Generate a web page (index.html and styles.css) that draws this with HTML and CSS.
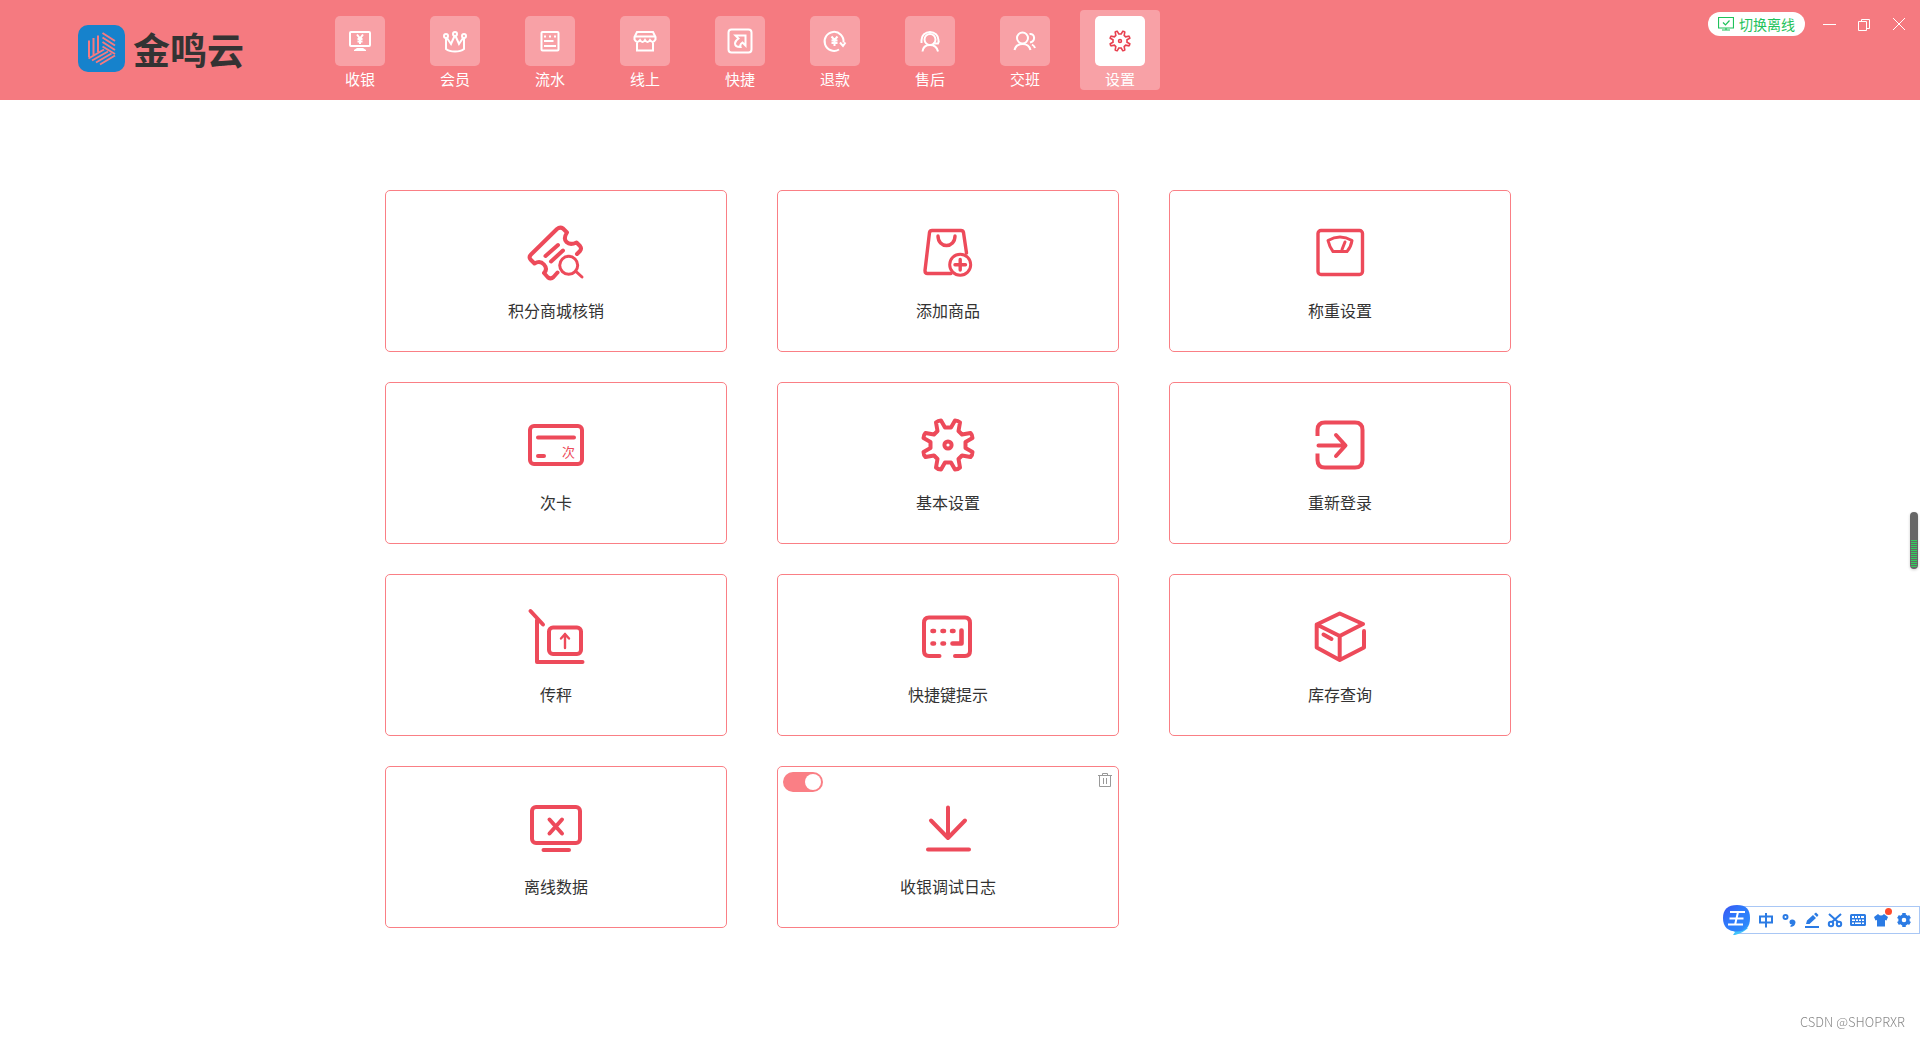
FILE: index.html
```html
<!DOCTYPE html>
<html lang="zh-CN">
<head>
<meta charset="utf-8">
<meta name="viewport" content="width=device-width, initial-scale=1">
<title>金鸣云</title>
<link rel="stylesheet" href="styles.css">
</head>
<body>
<svg class="defs" aria-hidden="true">
  <symbol id="gear" viewBox="-30 -30 60 60">
    <path d="M-3-17.500H3L7-24.500Q10-24.500 12-22.500L10.500-14L14-10.500L22.500-12Q24.500-10 24.500-7L17.500-3V3L24.500 7Q24.500 10 22.500 12L14 10.500L10.500 14L12 22.500Q10 24.500 7 24.500L3 17.500H-3L-7 24.500Q-10 24.500-12 22.500L-10.500 14L-14 10.500L-22.500 12Q-24.500 10-24.500 7L-17.500 3V-3L-24.500-7Q-24.500-10-22.500-12L-14-10.500L-10.500-14L-12-22.500Q-10-24.500-7-24.500Z"/>
    <circle r="3.600"/>
  </symbol>
</svg>

<header class="topbar">
  <a class="brand" href="#">
    <svg class="brand-mark" viewBox="0 0 47 47" aria-hidden="true">
      <rect width="47" height="47" rx="10" fill="#1682cc"/>
      <g stroke="#f57a80" stroke-width="2" fill="none">
        <path d="M11 15.500V32M15.500 13V30M20 10.500V27M24.500 8L37 16M24.500 12.500L37 20.500M24.500 17L37 25M24.500 21.500L37 29M10.500 33.500L26 24.500M14 35.500L30 26.500M18 37.500L33.500 28.500M22 39.500L37 30.500"/>
      </g>
    </svg>
    <span>金鸣云</span>
  </a>

  <nav class="menu" aria-label="主导航">
    <a class="menu-item" href="#"><span class="tile"><svg viewBox="0 0 50 50"><rect x="15" y="16" width="20" height="14" rx="1"/><path d="M22 18.500L25 22.500L28 18.500M25 22.500V28M22.500 23H27.500M22.500 25.500H27.500"/><path class="solid" d="M22 32H28L31 34V35H19V34Z"/></svg></span>收银</a>
    <a class="menu-item" href="#"><span class="tile"><svg viewBox="0 0 50 50"><circle cx="16" cy="20" r="2"/><circle cx="25" cy="18" r="2"/><circle cx="34" cy="20" r="2"/><path d="M16 22V33Q19 35.500 25 35.500T34 33V22M17 22L21 28L24.500 20M33 22L29 28L25.500 20"/></svg></span>会员</a>
    <a class="menu-item" href="#"><span class="tile"><svg viewBox="0 0 50 50"><rect x="16.500" y="16" width="17" height="18.500" rx="1"/><path d="M19 20.500H21M24 20.500H26M29 20.500H31M19 25H28.500M19 30H31"/></svg></span>流水</a>
    <a class="menu-item" href="#"><span class="tile"><svg viewBox="0 0 50 50"><path d="M17 16H33L35.500 21V23.500Q33 28 30 24Q27.500 28 25 24Q22.500 28 20 24Q17 28 14.500 23.500V21ZM14.500 20.500H35.500M17 26V34.500H33V26"/></svg></span>线上</a>
    <a class="menu-item" href="#"><span class="tile"><svg viewBox="0 0 50 50"><rect x="13.500" y="13.500" width="23" height="23" rx="3"/><path d="M20.500 19.500H30.500V29.500L27.500 26.500Q24.500 28.500 25.500 31Q20 31 20 27.500Q20 25 23.500 22.500Z"/></svg></span>快捷</a>
    <a class="menu-item" href="#"><span class="tile"><svg viewBox="0 0 50 50"><path d="M29 33.500A9.500 9.500 0 1 1 33.500 26.500M30 26.500L33 30L35.500 26.500M21.500 20.500L24.500 24L27.500 20.500M24.500 24V30M21.500 24.500H27.500M21.500 27H27.500"/></svg></span>退款</a>
    <a class="menu-item" href="#"><span class="tile"><svg viewBox="0 0 50 50"><circle cx="25" cy="23.500" r="5.500"/><path d="M16.500 27V24A8.500 8 0 0 1 33.500 24V26.500M17.500 35.500C18 31 21 29 25 29S32 31 33 35.500M28 27.500H33L34 25"/></svg></span>售后</a>
    <a class="menu-item" href="#"><span class="tile"><svg viewBox="0 0 50 50"><circle cx="22.500" cy="22" r="5.500"/><path d="M14.500 34Q16 28 22.500 28T30.500 34M29.500 18C35 17 36 25 30 26.500M32 28.500Q34.500 30 35 32"/></svg></span>交班</a>
    <a class="menu-item active" href="#" aria-current="page"><span class="tile"><svg class="nav-gear" viewBox="0 0 60 60"><use href="#gear"/></svg></span>设置</a>
  </nav>

  <div class="window-tools">
    <button class="offline" type="button"><svg viewBox="0 0 16 16" aria-hidden="true"><path d="M.5 1.500H15.500V12H.5ZM4 14H12M8 12V14M5 6.500L7.500 9L11.500 4.500"/></svg>切换离线</button>
    <button class="win" type="button" aria-label="最小化"><svg viewBox="0 0 14 14"><path d="M1 7.500H14"/></svg></button>
    <button class="win" type="button" aria-label="还原"><svg viewBox="0 0 14 14"><path d="M1.500 4.500H9.500V13.500H1.500ZM4.500 4V2.500H12.500V11.500H10"/></svg></button>
    <button class="win" type="button" aria-label="关闭"><svg viewBox="0 0 14 14"><path d="M1 1L13 13M13 1L1 13"/></svg></button>
  </div>
</header>

<main class="content">
  <div class="cards">
    <div class="card"><button type="button"><svg viewBox="0 0 60 60" stroke-width="4"><path d="M51 32L54 29Q56 26.500 54 24L50.500 20.500Q44 23.500 40.500 20T41 10.500L37 6.500Q34 4.500 31 7L5 32.500Q2.500 35 4.500 37.500L8.500 41.500Q14 38 18 42.500T18 51L22 55.500Q25 57.500 27.500 55L31.500 50.500M32 23L19.500 34M37 28.500L25 39.500"/><circle cx="42.700" cy="43.300" r="9" stroke-width="3"/><path stroke-width="3" d="M50 49.500L56 55"/></svg>积分商城核销</button></div>
    <div class="card"><button type="button"><svg viewBox="0 0 60 60" stroke-width="3.400"><path d="M48.500 31L45.500 10.500Q45 8.500 43 8.500H14Q12 8.500 11.500 10.500L7 48.500Q7 51.500 9.500 51.500H33M20 14C20 20 24 23.500 28.500 23.500S37 20 37 14"/><circle cx="42.200" cy="42.700" r="10.500" stroke-width="3"/><path d="M37 42.700H47.500M42.200 37.500V48"/></svg>添加商品</button></div>
    <div class="card"><button type="button"><svg viewBox="0 0 60 60" stroke-width="3.400"><rect x="8" y="8.500" width="44.500" height="44" rx="3"/><path stroke-width="3" d="M18 18.500Q30 11.500 42 18.500Q41 25 37 29.500H23Q19.500 25 18 18.500ZM35 20L32 27.500"/></svg>称重设置</button></div>
    <div class="card"><button type="button"><svg viewBox="0 0 60 60" stroke-width="4"><rect x="4" y="12" width="52" height="38" rx="4"/><path d="M12 23.500H48M12 42H18"/><text x="36" y="43">次</text></svg>次卡</button></div>
    <div class="card"><button type="button"><svg viewBox="0 0 60 60" stroke-width="4"><use href="#gear" y="1" width="60" height="60"/></svg>基本设置</button></div>
    <div class="card"><button type="button"><svg viewBox="0 0 60 60" stroke-width="4"><path stroke-linecap="butt" d="M7.500 22V16Q7.500 8.500 15 8.500H45Q52.500 8.500 52.500 16V46Q52.500 53.500 45 53.500H15Q7.500 53.500 7.500 46V39.500"/><path d="M8.500 31.500H35M26 21L35.500 31.500L26 42"/></svg>重新登录</button></div>
    <div class="card"><button type="button"><svg viewBox="0 0 60 60" stroke-width="4"><path d="M4.500 5L17 18.500M11 14V56H56.500"/><rect x="23" y="21.500" width="32" height="26.500" rx="4"/><path stroke-width="2.400" d="M39 28V42M35 32.500L39 28L43 32.500"/></svg>传秤</button></div>
    <div class="card"><button type="button"><svg viewBox="0 0 60 60" stroke-width="4"><path d="M21.500 50H11Q6 50 6 45V17Q6 11.500 11 11.500H47Q52 11.500 52 17V45Q52 50 47 50H37"/><path stroke-width="4.600" d="M14.500 25H16M24.500 25H26M34 25H35.500M14.500 37.500H16M24.500 37.500H26M34.500 37.500H43.500V24.500"/></svg>快捷键提示</button></div>
    <div class="card"><button type="button"><svg viewBox="0 0 60 60" stroke-width="4"><path d="M53 18L29.700 7.500L6.700 18.500V41.500L29.700 54L54 41.500V25M53 18L29.700 30V54M6.700 18.500L29.700 30M13.500 28.500L21.500 33"/></svg>库存查询</button></div>
    <div class="card"><button type="button"><svg viewBox="0 0 60 60" stroke-width="4"><rect x="6" y="9" width="48" height="36" rx="4"/><path d="M23.500 21.500L36 35.500M36 21.500L23.500 35.500M17.500 52H43"/></svg>离线数据</button></div>
    <div class="card">
      <button type="button"><svg viewBox="0 0 60 60" stroke-width="4"><path d="M30 9.500V40M13 22.500L30 40L47 22.500M10 51.500H51"/></svg>收银调试日志</button>
      <input class="switch" type="checkbox" role="switch" aria-label="收银调试日志" checked>
      <button class="trash" type="button" aria-label="删除"><svg viewBox="0 0 14 14"><path d="M0 2.500H14M4.500 2.500V.5H9.500V2.500M1.500 2.500V13.500H12.500V2.500M5.500 5V11M8.500 5V11"/></svg></button>
    </div>
  </div>
</main>

<div class="meter" aria-hidden="true"><span></span></div>

<div class="ime" role="toolbar" aria-label="输入法">
  <svg class="ime-logo" viewBox="0 0 28 30" aria-hidden="true">
    <defs><linearGradient id="ime-blue" x1="0" y1="0" x2="1" y2="1"><stop offset="0" stop-color="#3b52f2"/><stop offset=".4" stop-color="#2e78fb"/><stop offset=".8" stop-color="#2e86fb"/><stop offset="1" stop-color="#34c8ff"/></linearGradient></defs>
    <path fill="#42c3fa" d="M6 23H25Q20 28 12 30H10L12 27Z"/>
    <path fill="url(#ime-blue)" d="M14 0C23 0 27 4 27 13S23 26.500 14 26.500S0 22 0 13S5 0 14 0Z"/>
    <path fill="none" stroke="#fff" stroke-width="2" d="M7 7H22M6.500 13.500H20.500M5 19.500H20M15 7L12 20"/>
  </svg>
  <button type="button" aria-label="中文"><svg viewBox="0 0 16 16"><path d="M2 4.500H14V10.500H2ZM8 1V15.500"/></svg></button>
  <button type="button" aria-label="标点"><svg viewBox="0 0 16 16"><circle cx="4.500" cy="5" r="2"/><path class="solid" d="M11 7.500A3 3 0 0 1 14.500 10.500Q14 14.500 9.500 15V13.500L11 12.500A2.500 2.500 0 0 1 11 7.500Z"/></svg></button>
  <button type="button" aria-label="手写"><svg viewBox="0 0 16 16"><path d="M1 15H15"/><path class="solid" d="M2 12L3 8.500L9 3L12 6L5.500 12ZM10 2L12 .5L14.500 3L13 5Z"/></svg></button>
  <button type="button" aria-label="截图"><svg viewBox="0 0 16 16"><path d="M2 2L11 10M14 2L5 10"/><circle cx="4" cy="12" r="2.200"/><circle cx="12" cy="12" r="2.200"/></svg></button>
  <button type="button" aria-label="键盘"><svg viewBox="0 0 16 16"><path class="solid" fill-rule="evenodd" d="M1.500 2H14.500Q16 2 16 3.500V12.500Q16 14 14.500 14H1.500Q0 14 0 12.500V3.500Q0 2 1.500 2ZM2 4V6H4V4ZM5 4V6H7V4ZM8 4V6H10V4ZM11 4V6H14V4ZM2 7.500V9H5V7.500ZM6 7.500V9H8V7.500ZM9 7.500V9H11V7.500ZM12 7.500V9H14V7.500ZM2 10.500V12H4V10.500ZM5 10.500V12H11V10.500ZM12 10.500V12H14V10.500Z"/></svg></button>
  <button type="button" aria-label="皮肤"><svg viewBox="0 0 16 16"><path class="solid" d="M5 2Q8 5 11 2L15 5L13.500 8.500L12 8V14.500H4V8L2.500 8.500L1 5Z"/></svg><i class="dot"></i></button>
  <button type="button" aria-label="设置"><svg viewBox="0 0 16 16"><circle cx="8" cy="8" r="4" stroke-width="3.400"/><path stroke-width="3.500" d="M8 1V3M8 13V15M2 4.500L3.500 5.400M12.500 10.600L14 11.500M2 11.500L3.500 10.600M12.500 5.400L14 4.500"/></svg></button>
</div>

<footer class="credit">CSDN @SHOPRXR</footer>
</body>
</html>
```

FILE: styles.css
```css
* { box-sizing: border-box; }

body {
  margin: 0;
  min-height: 100vh;
  display: flex;
  flex-direction: column;
  background: #fff;
  color: #333;
  font: 400 16px/24px "Noto Sans CJK SC", sans-serif;
}

button {
  margin: 0;
  padding: 0;
  border: 0;
  background: none;
  color: inherit;
  font: inherit;
  cursor: pointer;
}

a { color: inherit; text-decoration: none; }

svg { display: block; fill: none; stroke: currentColor; }
.solid { fill: currentColor; stroke: none; }
.defs { position: absolute; width: 0; height: 0; }

/* Top bar */
.topbar {
  display: flex;
  align-items: flex-start;
  height: 100px;
  padding: 0 7px 0 78px;
  background: #f57a80;
  color: #fff;
}

.brand {
  display: flex;
  align-items: center;
  gap: 8px;
  width: 242px;
  height: 97px;
  color: #333;
  font-size: 37px;
  font-weight: 700;
}
.brand-mark { width: 47px; height: 47px; stroke: none; }

.menu { display: flex; gap: 15px; padding-top: 10px; }
.menu-item {
  display: flex;
  flex-direction: column;
  align-items: center;
  gap: 2px;
  width: 80px;
  height: 80px;
  padding-top: 6px;
  border-radius: 4px;
  font-size: 15px;
  line-height: 22px;
}
.menu-item.active { background: #f8a1a6; }
.tile {
  display: grid;
  place-items: center;
  width: 50px;
  height: 50px;
  border-radius: 5px;
  background: #f8a1a6;
}
.tile svg { width: 50px; height: 50px; stroke-width: 2; }
.active .tile { background: #fff; color: #e8404f; }
.tile .nav-gear { width: 24px; height: 24px; stroke-width: 4; }

.window-tools {
  display: flex;
  align-items: center;
  gap: 7px;
  margin-left: auto;
  padding-top: 10px;
}
.offline {
  display: flex;
  align-items: center;
  justify-content: center;
  gap: 5px;
  width: 97px;
  height: 24px;
  margin-right: 3px;
  border-radius: 12px;
  background: #fff;
  color: #1fc25b;
  font-size: 14px;
}
.offline svg { width: 16px; height: 16px; stroke-width: 1.2; }
.win { display: grid; place-items: center; width: 28px; height: 28px; }
.win svg { width: 14px; height: 14px; }

/* Settings cards */
.content { flex: 1; padding: 90px 24px 90px 0; }
.cards {
  display: grid;
  grid-template-columns: repeat(3, 1fr);
  gap: 30px 50px;
  max-width: 1126px;
  margin: 0 auto;
}
.card {
  position: relative;
  display: flex;
  height: 162px;
  border: 1px solid #fa7f85;
  border-radius: 5px;
}
.card > button:first-child {
  flex: 1;
  display: flex;
  flex-direction: column;
  align-items: center;
  gap: 16px;
  padding-top: 31px;
}
.card > button:first-child svg {
  width: 60px;
  height: 60px;
  color: #ed4a5a;
  stroke-linecap: round;
  stroke-linejoin: round;
}
.card text { fill: currentColor; stroke: none; font-size: 13px; }

.switch {
  position: absolute;
  top: 5px;
  left: 5px;
  width: 40px;
  height: 20px;
  margin: 0;
  padding: 2px;
  border-radius: 10px;
  background: #ccc;
  appearance: none;
}
.switch::before {
  content: "";
  display: block;
  width: 16px;
  height: 16px;
  border-radius: 50%;
  background: #fff;
}
.switch:checked { background: #fa7f85; }
.switch:checked::before { margin-left: auto; }
.trash { position: absolute; top: 6px; right: 6px; color: #999; }
.trash svg { width: 14px; height: 14px; }

/* Floating level meter */
.meter {
  position: fixed;
  top: 512px;
  right: 2px;
  display: flex;
  align-items: flex-end;
  width: 8px;
  height: 57px;
  padding: 1px;
  border-radius: 4px;
  background: #666;
  box-shadow: 0 1px 3px rgba(0, 0, 0, .2);
}
.meter span {
  flex: 1;
  height: 28px;
  border-radius: 0 0 3px 3px;
  background: repeating-linear-gradient(#2fd15c 0 1px, #666 1px 2px);
}

/* Input method toolbar */
.ime {
  position: fixed;
  right: 0;
  bottom: 103px;
  display: flex;
  align-items: center;
  gap: 7px;
  width: 184px;
  height: 28px;
  padding: 0 8px 0 21px;
  border: 1px solid #a9c7f5;
  background: #fff;
  color: #2b7be4;
}
.ime-logo { position: absolute; left: -14px; top: -2px; width: 28px; height: 30px; stroke: none; }
.ime button { position: relative; flex: 1; display: grid; place-items: center; }
.ime button svg { width: 16px; height: 16px; stroke-width: 2; }
.dot {
  position: absolute;
  top: -4px;
  right: -3px;
  width: 7px;
  height: 7px;
  border-radius: 50%;
  background: #ff4a2b;
}

.credit {
  position: fixed;
  right: 15px;
  bottom: 5px;
  color: #888;
  font-size: 13px;
  font-weight: 300;
  line-height: 20px;
}
```
